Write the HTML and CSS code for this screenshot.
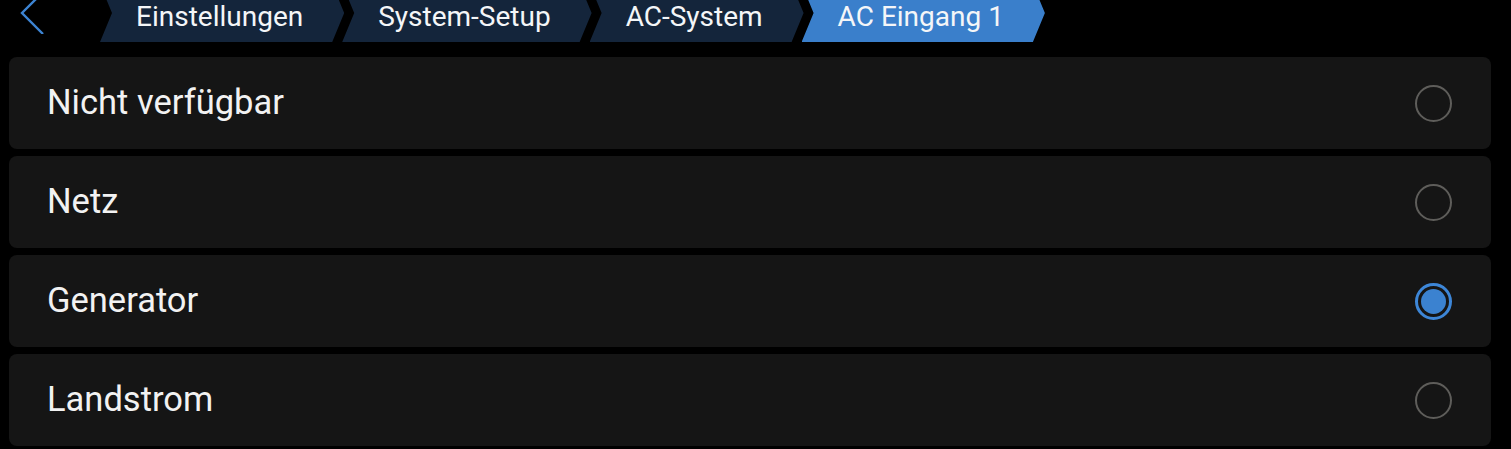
FILE: index.html
```html
<!DOCTYPE html>
<html lang="de">
<head>
<meta charset="utf-8">
<title>AC Eingang 1</title>
<link rel="stylesheet" href="styles.css">
</head>
<body>
<header class="topbar">
  <button class="back" aria-label="Zurück">
    <svg width="30" height="50" viewBox="0 0 30 50"><polyline points="23,8 2,29 23,50" fill="none" stroke="#3d84d2" stroke-width="2.4"/></svg>
  </button>
  <nav class="crumbs">
    <span class="crumb">Einstellungen</span>
    <span class="crumb">System-Setup</span>
    <span class="crumb">AC-System</span>
    <span class="crumb active">AC Eingang 1</span>
  </nav>
</header>
<main class="list">
  <div class="row"><span class="label">Nicht verfügbar</span><span class="radio"></span></div>
  <div class="row"><span class="label">Netz</span><span class="radio"></span></div>
  <div class="row"><span class="label">Generator</span><span class="radio checked"></span></div>
  <div class="row"><span class="label">Landstrom</span><span class="radio"></span></div>
</main>
</body>
</html>
```
FILE: styles.css
```css
* { box-sizing: border-box; }
html, body { margin: 0; padding: 0; background: #000; }
body {
  font-family: Roboto, "Noto Sans", sans-serif;
  color: #f2f2f2;
  overflow: hidden;
}
.topbar {
  height: 57px;
  display: flex;
  align-items: flex-start;
  overflow: hidden;
}
.back {
  width: 100px;
  height: 42px;
  padding: 0 0 0 20px;
  margin: 0;
  border: 0;
  background: none;
  display: flex;
  align-items: flex-start;
  margin-top: -16px;
}
.crumbs {
  display: flex;
  margin-top: -16px;
}
.crumb {
  height: 58px;
  display: flex;
  align-items: center;
  padding: 6px 41px 0 36px;
  font-size: 28px;
  color: #f4f6f8;
  background: #14253b;
  clip-path: polygon(0 0, calc(100% - 12px) 0, 100% 50%, calc(100% - 12px) 100%, 0 100%, 12px 50%);
  margin-right: -2px;
}
.crumb.active { background: #3a7fcb; }
.list {
  padding: 0 20px 0 9px;
  display: flex;
  flex-direction: column;
  gap: 7px;
}
.row {
  height: 92px;
  background: #151515;
  border-radius: 8px;
  display: flex;
  align-items: center;
  justify-content: space-between;
  padding: 0 39px 0 38px;
}
.label {
  font-size: 34.5px;
  padding-bottom: 3px;
}
.radio {
  width: 37px;
  height: 37px;
  border-radius: 50%;
  border: 2px solid #5e5d5a;
  position: relative;
}
.radio.checked {
  border: 3px solid #3d86d7;
}
.radio.checked::after {
  content: "";
  position: absolute;
  inset: 3px;
  border-radius: 50%;
  background: #3b82d0;
}
```
